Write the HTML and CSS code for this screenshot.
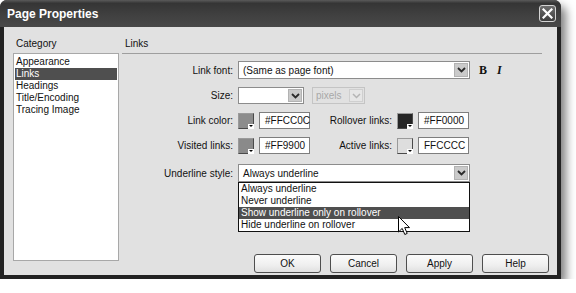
FILE: index.html
```html
<!DOCTYPE html>
<html lang="en">
<head>
    <meta charset="UTF-8">
    <title>Page Properties</title>
    <link rel="stylesheet" href="styles.css">
</head>
<body>
    <div class="window">
        <div class="titlebar">
            <span class="title">Page Properties</span>
            <span class="close">
                <svg width="11" height="11" viewBox="0 0 11 11"><path d="M1.5 1.5 L9.5 9.5 M9.5 1.5 L1.5 9.5" stroke="#fff" stroke-width="2.2" stroke-linecap="square"/></svg>
            </span>
        </div>
        <div class="dialog-body">
            <div class="category">
                <div class="cat-label">Category</div>
                <ul class="cat-list">
                    <li>Appearance</li>
                    <li class="selected">Links</li>
                    <li>Headings</li>
                    <li>Title/Encoding</li>
                    <li>Tracing Image</li>
                </ul>
            </div>
            <div class="panel">
                <div class="panel-title">Links</div>
                <div class="rows">
                    <div class="row row-font">
                        <span class="lbl">Link font:</span>
                        <div class="select wide">
                            <span class="value">(Same as page font)</span>
                            <span class="arrow"><svg width="9" height="6" viewBox="0 0 9 6"><path d="M1 1 L4.5 4.5 L8 1" fill="none" stroke="#2a2a2a" stroke-width="1.8"/></svg></span>
                        </div>
                        <span class="style-btn bold">B</span>
                        <span class="style-btn italic">I</span>
                    </div>
                    <div class="row row-size">
                        <span class="lbl">Size:</span>
                        <div class="select size">
                            <span class="value"></span>
                            <span class="arrow"><svg width="9" height="6" viewBox="0 0 9 6"><path d="M1 1 L4.5 4.5 L8 1" fill="none" stroke="#2a2a2a" stroke-width="1.8"/></svg></span>
                        </div>
                        <div class="select units disabled">
                            <span class="value">pixels</span>
                            <span class="arrow"><svg width="9" height="6" viewBox="0 0 9 6"><path d="M1 1 L4.5 4.5 L8 1" fill="none" stroke="#b4b4b4" stroke-width="1.5"/></svg></span>
                        </div>
                    </div>
                    <div class="row row-color">
                        <span class="lbl">Link color:</span>
                        <span class="swatch" style="background-color: #8c8c8c;"><i class="swatch-tab"></i></span>
                        <span class="hex">#FFCC0C</span>
                        <span class="lbl2">Rollover links:</span>
                        <span class="swatch" style="background-color: #262626;"><i class="swatch-tab"></i></span>
                        <span class="hex">#FF0000</span>
                    </div>
                    <div class="row row-color">
                        <span class="lbl">Visited links:</span>
                        <span class="swatch" style="background-color: #8a8a8a;"><i class="swatch-tab"></i></span>
                        <span class="hex">#FF9900</span>
                        <span class="lbl2">Active links:</span>
                        <span class="swatch" style="background-color: #dedede;"><i class="swatch-tab"></i></span>
                        <span class="hex">FFCCCC</span>
                    </div>
                    <div class="row row-underline">
                        <span class="lbl">Underline style:</span>
                        <div class="select wide open">
                            <span class="value">Always underline</span>
                            <span class="arrow"><svg width="9" height="6" viewBox="0 0 9 6"><path d="M1 1 L4.5 4.5 L8 1" fill="none" stroke="#2a2a2a" stroke-width="1.8"/></svg></span>
                            <ul class="dropdown">
                                <li>Always underline</li>
                                <li>Never underline</li>
                                <li class="selected">Show underline only on rollover</li>
                                <li>Hide underline on rollover</li>
                            </ul>
                        </div>
                    </div>
                </div>
                <div class="buttons">
                    <button class="btn">OK</button>
                    <button class="btn">Cancel</button>
                    <button class="btn">Apply</button>
                    <button class="btn">Help</button>
                </div>
            </div>
        </div>
        <svg class="cursor" width="13" height="20" viewBox="0 0 13 20">
            <path d="M0.5 0.5 L0.5 16 L4.2 12.4 L6.8 18.5 L9.2 17.4 L6.7 11.6 L11.5 11.6 Z" fill="#fff" stroke="#000" stroke-width="1"/>
        </svg>
    </div>
</body>
</html>
```

FILE: styles.css
```css
body {
    margin: 0;
    background: #fff;
    font-family: "Liberation Sans", Arial, sans-serif;
    font-size: 10px;
    color: #111;
}
.window {
    position: relative;
    width: 561px;
    height: 279px;
    display: flex;
    flex-direction: column;
    background: #222;
    border-radius: 7px 7px 0 0;
    box-shadow: 5px 6px 10px rgba(0, 0, 0, 0.5);
}
.titlebar {
    height: 27px;
    flex: none;
    display: flex;
    align-items: center;
    justify-content: space-between;
    padding: 0 5px 0 7px;
    border-radius: 7px 7px 0 0;
    background: linear-gradient(#5a5a5a, #353535 12%, #404040 55%, #484848);
}
.title {
    color: #fff;
    font-size: 12px;
    font-weight: bold;
}
.close {
    width: 15px;
    height: 15px;
    display: flex;
    align-items: center;
    justify-content: center;
    border: 1px solid #d4d4d4;
    border-radius: 3px;
    background: linear-gradient(#6e6e6e, #3e3e3e);
}
.dialog-body {
    flex: 1;
    display: flex;
    margin: 0 4px 4px 4px;
    padding: 10px 8px 2px 9px;
    background: #e1e1e1;
}
.category {
    width: 106px;
    flex: none;
    display: flex;
    flex-direction: column;
}
.cat-label {
    line-height: 13px;
    padding-left: 3px;
    margin-bottom: 3px;
}
.cat-list {
    list-style: none;
    margin: 0;
    padding: 2px 1px 1px;
    height: 208px;
    box-sizing: border-box;
    background: #fff;
    border: 1px solid #a8a8a8;
}
.cat-list li {
    height: 12px;
    line-height: 12px;
    padding-left: 1px;
}
.selected {
    background: #4f4f4f;
    color: #fff;
}
.panel {
    flex: 1;
    margin-left: 3px;
    display: flex;
    flex-direction: column;
}
.panel-title {
    width: 420px;
    line-height: 13px;
    padding: 0 0 3px 3px;
    box-sizing: border-box;
    border-bottom: 1px solid #9e9e9e;
}
.rows {
    margin-top: 7px;
    display: flex;
    flex-direction: column;
    gap: 8px;
}
.row {
    display: flex;
    align-items: center;
}
.row-underline {
    margin-top: 2px;
}
.lbl {
    width: 116px;
    flex: none;
    padding-right: 5px;
    box-sizing: border-box;
    text-align: right;
}
.lbl2 {
    width: 87px;
    flex: none;
    padding-right: 5px;
    box-sizing: border-box;
    text-align: right;
}
.select {
    position: relative;
    height: 18px;
    flex: none;
    display: flex;
    align-items: center;
    box-sizing: border-box;
    background: #fff;
    border: 1px solid #8c8c8c;
}
.select.wide {
    width: 232px;
}
.select.size {
    width: 66px;
    height: 17px;
}
.select.units {
    width: 53px;
    height: 17px;
    margin-left: 8px;
}
.select .value {
    flex: 1;
    padding-left: 4px;
    white-space: nowrap;
}
.arrow {
    width: 14px;
    height: 14px;
    margin-right: 1px;
    display: flex;
    align-items: center;
    justify-content: center;
    box-sizing: border-box;
    background: #cacaca;
    border: 1px solid #b2b2b2;
}
.select.size .arrow,
.select.units .arrow {
    height: 13px;
}
.select.disabled {
    background: #e1e1e1;
    border-color: #c4c4c4;
    color: #a8a8a8;
}
.select.disabled .value {
    padding-left: 3px;
}
.select.disabled .arrow {
    background: #e6e6e6;
    border-color: #cfcfcf;
}
.style-btn {
    font-family: "Liberation Serif", "Times New Roman", serif;
    font-size: 12px;
    font-weight: bold;
    color: #111;
    line-height: 14px;
}
.bold {
    margin-left: 9px;
}
.italic {
    font-style: italic;
    margin-left: 10px;
}
.swatch {
    position: relative;
    width: 16px;
    height: 16px;
    flex: none;
    box-sizing: border-box;
    border: 1px solid #9a9a9a;
    border-right-color: #4a4a4a;
    border-bottom-color: #4a4a4a;
    margin-right: 5px;
}
.swatch-tab {
    position: absolute;
    right: -1px;
    bottom: -1px;
    width: 6px;
    height: 5px;
    background: #fff;
}
.swatch-tab::after {
    content: "";
    position: absolute;
    left: 1px;
    top: 1px;
    border-left: 2px solid transparent;
    border-right: 2px solid transparent;
    border-top: 2px solid #000;
}
.hex {
    width: 51px;
    height: 17px;
    flex: none;
    box-sizing: border-box;
    padding-left: 5px;
    line-height: 15px;
    background: #fff;
    border: 1px solid #7e7e7e;
}
.dropdown {
    position: absolute;
    left: -1px;
    top: 17px;
    width: 232px;
    margin: 0;
    padding: 0;
    list-style: none;
    box-sizing: border-box;
    background: #fff;
    border: 1px solid #111;
}
.dropdown li {
    height: 12px;
    line-height: 12px;
    padding-left: 2px;
    white-space: nowrap;
}
.buttons {
    margin-top: auto;
    display: flex;
    justify-content: flex-end;
    gap: 9px;
}
.btn {
    width: 67px;
    height: 19px;
    padding: 0;
    font-family: "Liberation Sans", Arial, sans-serif;
    font-size: 10px;
    color: #111;
    border: 1px solid #4e4e4e;
    border-radius: 3px;
    background: linear-gradient(#fbfbfb, #efefef 60%, #e0e0e0);
}
.cursor {
    position: absolute;
    left: 398px;
    top: 216px;
}
```
